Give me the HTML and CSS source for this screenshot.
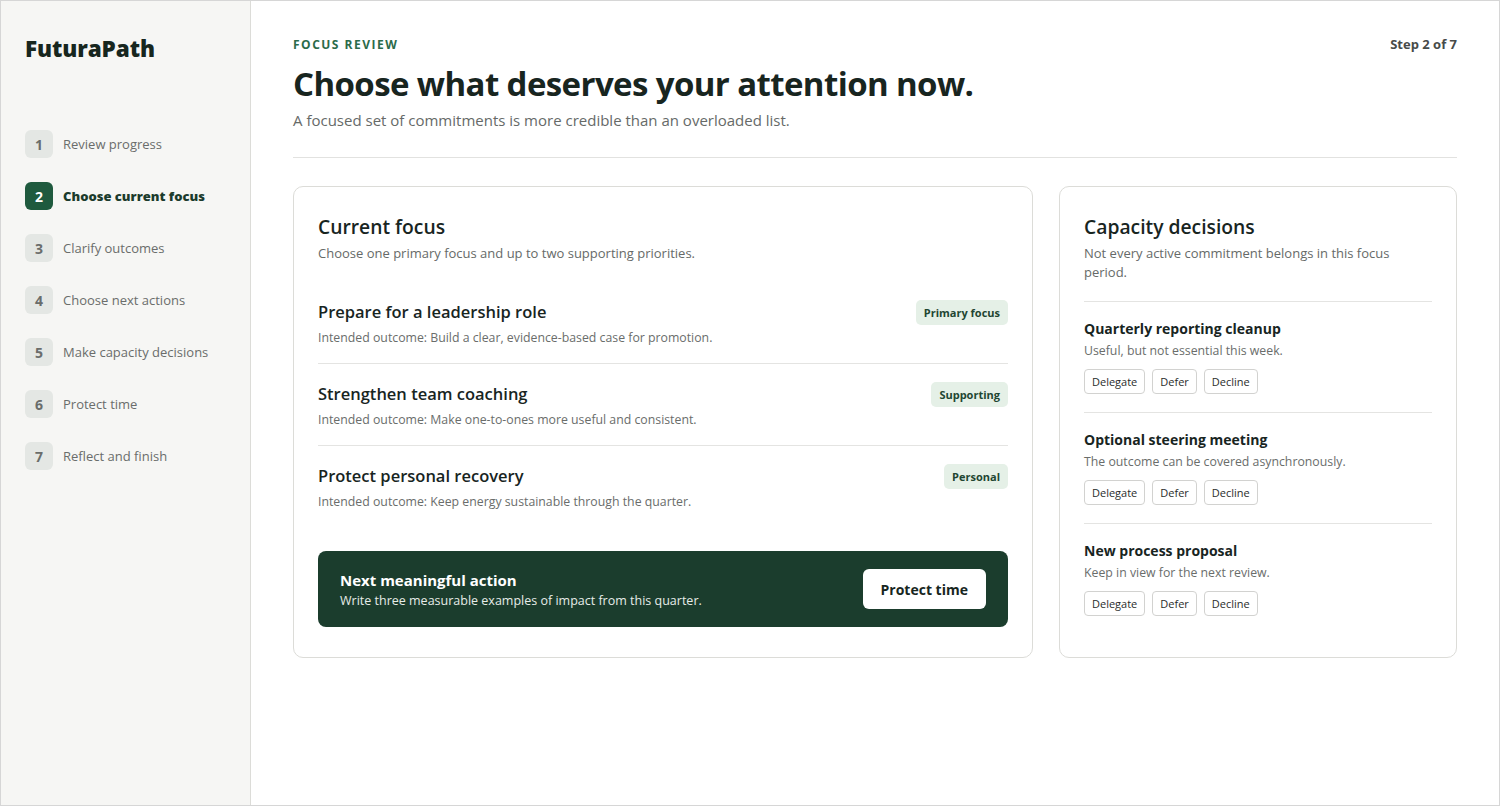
FILE: index.html
```html
<!DOCTYPE html>
<html lang="en">
<head>
<meta charset="UTF-8">
<title>FuturaPath – Focus review</title>
<meta name="viewport" content="width=device-width, initial-scale=1.0">
<link rel="stylesheet" href="styles.css">
</head>
<body>
<div class="app">

    <!-- Sidebar with the review steps -->
    <aside class="sidebar">
        <div class="brand">FuturaPath</div>
        <ol class="steps">
            <li class="step"><span class="num">1</span>Review progress</li>
            <li class="step active"><span class="num">2</span>Choose current focus</li>
            <li class="step"><span class="num">3</span>Clarify outcomes</li>
            <li class="step"><span class="num">4</span>Choose next actions</li>
            <li class="step"><span class="num">5</span>Make capacity decisions</li>
            <li class="step"><span class="num">6</span>Protect time</li>
            <li class="step"><span class="num">7</span>Reflect and finish</li>
        </ol>
    </aside>

    <main class="main">
        <header class="page-head">
            <div class="head-text">
                <div class="eyebrow">FOCUS REVIEW</div>
                <h1>Choose what deserves your attention now.</h1>
                <p class="lead">A focused set of commitments is more credible than an overloaded list.</p>
            </div>
            <div class="step-count">Step 2 of 7</div>
        </header>

        <div class="columns">
            <!-- Current focus -->
            <section class="card focus-card">
                <h2>Current focus</h2>
                <p class="card-sub">Choose one primary focus and up to two supporting priorities.</p>

                <div class="focus-list">
                    <div class="focus-item">
                        <div>
                            <h3>Prepare for a leadership role</h3>
                            <p>Intended outcome: Build a clear, evidence-based case for promotion.</p>
                        </div>
                        <span class="tag">Primary focus</span>
                    </div>
                    <div class="focus-item">
                        <div>
                            <h3>Strengthen team coaching</h3>
                            <p>Intended outcome: Make one-to-ones more useful and consistent.</p>
                        </div>
                        <span class="tag">Supporting</span>
                    </div>
                    <div class="focus-item">
                        <div>
                            <h3>Protect personal recovery</h3>
                            <p>Intended outcome: Keep energy sustainable through the quarter.</p>
                        </div>
                        <span class="tag">Personal</span>
                    </div>
                </div>

                <div class="next-action">
                    <div>
                        <h4>Next meaningful action</h4>
                        <p>Write three measurable examples of impact from this quarter.</p>
                    </div>
                    <button class="btn-light">Protect time</button>
                </div>
            </section>

            <!-- Capacity decisions -->
            <section class="card capacity-card">
                <h2>Capacity decisions</h2>
                <p class="card-sub">Not every active commitment belongs in this focus period.</p>

                <div class="decision">
                    <h3>Quarterly reporting cleanup</h3>
                    <p>Useful, but not essential this week.</p>
                    <div class="choices">
                        <button>Delegate</button><button>Defer</button><button>Decline</button>
                    </div>
                </div>
                <div class="decision">
                    <h3>Optional steering meeting</h3>
                    <p>The outcome can be covered asynchronously.</p>
                    <div class="choices">
                        <button>Delegate</button><button>Defer</button><button>Decline</button>
                    </div>
                </div>
                <div class="decision">
                    <h3>New process proposal</h3>
                    <p>Keep in view for the next review.</p>
                    <div class="choices">
                        <button>Delegate</button><button>Defer</button><button>Decline</button>
                    </div>
                </div>
            </section>
        </div>
    </main>
</div>
</body>
</html>
```

FILE: styles.css
```css
* {
    box-sizing: border-box;
}
body {
    margin: 0;
    font-family: "Open Sans", "Noto Sans", sans-serif;
    color: #1b2621;
    background: #fff;
}
h1, h2, h3, h4, p {
    margin: 0;
}
.app {
    display: flex;
    height: 806px;
    border: 1px solid #d6d6d6;
}

/* sidebar */
.sidebar {
    width: 250px;
    flex-shrink: 0;
    background: #f6f6f4;
    border-right: 1px solid #dcdcd8;
    padding: 32px 24px;
}
.brand {
    font-size: 22.5px;
    font-weight: 800;
    color: #17261e;
    letter-spacing: -0.1px;
}
.steps {
    list-style: none;
    margin: 66px 0 0;
    padding: 0;
    display: flex;
    flex-direction: column;
    gap: 24px;
}
.step {
    display: flex;
    align-items: center;
    gap: 10px;
    font-size: 13px;
    color: #6a6d6b;
    height: 28px;
}
.num {
    width: 28px;
    height: 28px;
    border-radius: 6px;
    background: #e4e7e4;
    color: #6a6d6b;
    font-size: 14px;
    font-weight: 700;
    display: flex;
    align-items: center;
    justify-content: center;
}
.step.active {
    color: #1b3b2c;
    font-weight: 800;
}
.step.active .num {
    background: #1f5a3e;
    color: #fff;
}

/* main */
.main {
    flex: 1;
    padding: 35px 42px 0;
}
.page-head {
    display: flex;
    justify-content: space-between;
    align-items: flex-start;
    padding-bottom: 27px;
    border-bottom: 1px solid #e2e2e0;
}
.eyebrow {
    font-size: 12px;
    font-weight: 700;
    letter-spacing: 1.5px;
    color: #2b6b4a;
}
h1 {
    margin-top: 8px;
    font-size: 33px;
    font-weight: 700;
    color: #18251f;
    letter-spacing: -0.6px;
}
.lead {
    margin-top: 4px;
    font-size: 15px;
    color: #666a68;
}
.step-count {
    font-size: 13px;
    font-weight: 700;
    color: #474b49;
    margin-top: -1px;
}

.columns {
    display: grid;
    grid-template-columns: minmax(0, 1fr) 398px;
    gap: 26px;
    margin-top: 28px;
    align-items: stretch;
}
.card {
    border: 1px solid #dcdcd8;
    border-radius: 10px;
    padding: 26px 24px 30px;
    background: #fff;
}
.card h2 {
    font-size: 19.3px;
    line-height: 27px;
    font-weight: 600;
    color: #18251f;
}
.card-sub {
    margin-top: 4px;
    font-size: 13px;
    line-height: 19px;
    color: #666a68;
}

/* focus list */
.focus-list {
    margin-top: 19px;
}
.focus-item {
    display: flex;
    justify-content: space-between;
    align-items: flex-start;
    padding: 18px 0 17px;
    border-bottom: 1px solid #e4e4e2;
}
.focus-item:last-child {
    border-bottom: none;
}
.focus-item h3 {
    font-size: 16.5px;
    font-weight: 600;
    color: #18251f;
}
.focus-item p {
    margin-top: 6px;
    font-size: 12.3px;
    color: #6a6d6b;
}
.tag {
    background: #e5f0e7;
    color: #1f4632;
    font-size: 11px;
    font-weight: 700;
    padding: 5px 8px;
    border-radius: 5px;
}

.next-action {
    margin-top: 24px;
    background: #1b3d2d;
    border-radius: 8px;
    padding: 18px 22px;
    display: flex;
    justify-content: space-between;
    align-items: center;
    color: #fff;
}
.next-action h4 {
    font-size: 15px;
    font-weight: 700;
}
.next-action p {
    margin-top: 2px;
    font-size: 12.5px;
    color: #e6ece8;
}
.btn-light {
    font-family: inherit;
    background: #fff;
    color: #17261e;
    border: none;
    border-radius: 6px;
    font-size: 14px;
    font-weight: 700;
    padding: 0 18px;
    height: 40px;
}

/* capacity decisions */
.decision {
    margin-top: 19px;
    padding-top: 17px;
    border-top: 1px solid #e4e4e2;
}
.decision + .decision {
    margin-top: 18px;
}
.decision h3 {
    font-size: 14px;
    font-weight: 700;
    color: #18251f;
}
.decision p {
    margin-top: 4px;
    font-size: 12.3px;
    color: #6a6d6b;
}
.choices {
    display: flex;
    gap: 7px;
    margin-top: 10px;
}
.choices button {
    font-family: inherit;
    font-size: 11px;
    color: #2a2d2b;
    background: #fff;
    border: 1px solid #d2d2d0;
    border-radius: 4px;
    height: 25px;
    padding: 0 7px;
}
```
